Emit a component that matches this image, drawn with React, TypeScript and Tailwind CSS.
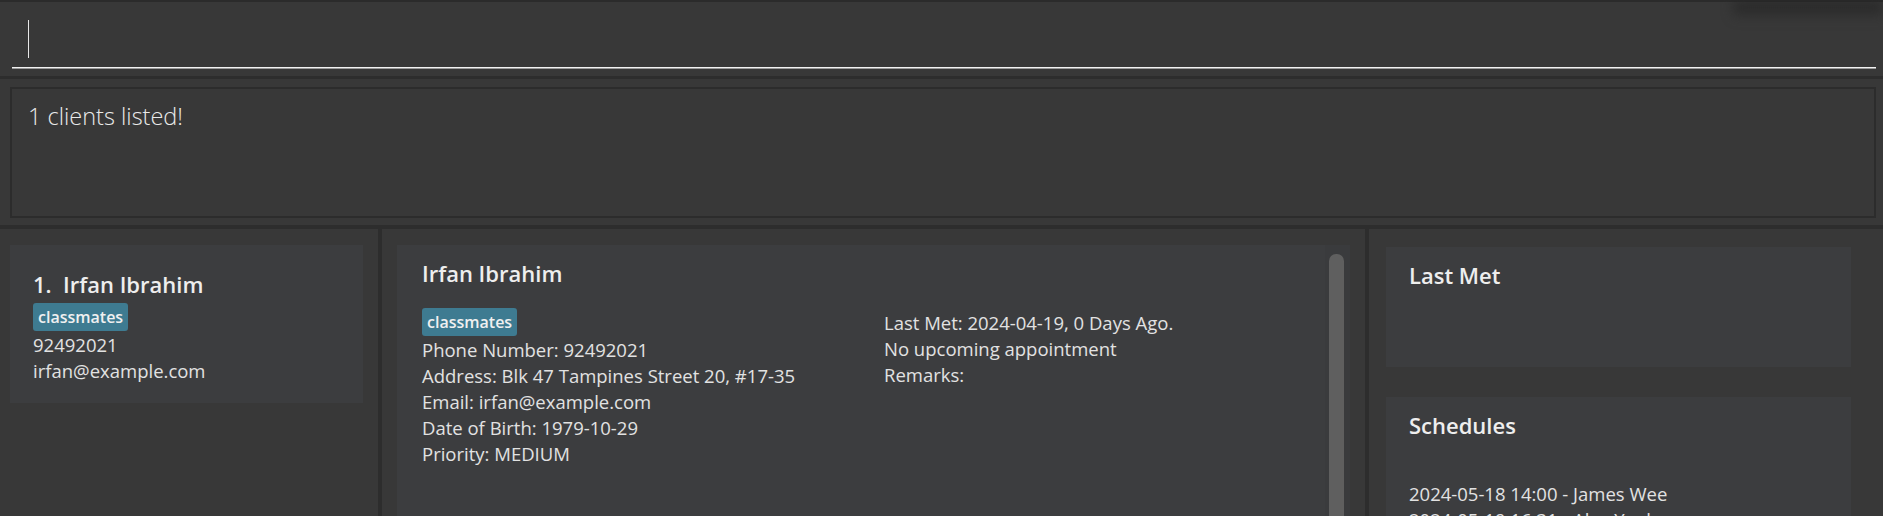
const font = "font-['Open_Sans','Noto_Sans',sans-serif]";

const Tag = ({ label }: { label: string }) => (
  <span className="inline-block bg-[#3e7b91] text-[#f0f0f0] font-semibold text-[16px] leading-[28px] px-[5px] rounded-[3px]">
    {label}
  </span>
);

const App = () => {
  return (
    <div className={`w-full h-[516px] bg-[#383838] overflow-hidden flex flex-col text-[#e6e6e6] ${font}`}>
      {/* command box */}
      <div className="relative h-[76px] border-t-2 border-[#2b2b2b] shrink-0">
        <div className="absolute right-0 top-0 w-[150px] h-[18px] bg-gradient-to-b from-[#232323] to-transparent blur-[6px]" />
        <div className="pt-[18px] pl-[28px]">
          <div className="w-[1px] h-[38px] bg-[#e8e8e8]" />
        </div>
        <div className="mt-[9px] ml-[12px] mr-[7px] h-[2px] bg-[#f2f2f2] border-b border-[#9a9a9a]" />
      </div>
      <div className="h-[3px] bg-[#2d2d2d] shrink-0" />

      {/* result display */}
      <div className="h-[146px] shrink-0 pt-[8px] pl-[10px] pr-[7px]">
        <div className="h-[131px] border-2 border-[#2c2c2c] pl-[16px] pt-[12px]">
          <p className="text-[23.5px] font-light text-[#eaeaea] leading-[30px]">1 clients listed!</p>
        </div>
      </div>
      <div className="h-[4px] bg-[#2d2d2d] shrink-0" />

      {/* main panels */}
      <div className="flex flex-1 min-h-0">
        {/* client list */}
        <div className="w-[378px] shrink-0 pl-[10px] pr-[15px] pt-[16px]">
          <div className="bg-[#3c3d3f] h-[158px] pl-[23px] pt-[24px]">
            <div className="text-[22px] font-semibold text-[#eeeeee] leading-[30px]">
              1.&nbsp;&nbsp;Irfan Ibrahim
            </div>
            <div className="mt-[4px]">
              <Tag label="classmates" />
            </div>
            <div className="text-[18.5px] leading-[26px] text-[#e2e2e2] mt-[1px]">92492021</div>
            <div className="text-[18.5px] leading-[26px] text-[#e2e2e2]">irfan@example.com</div>
          </div>
        </div>
        <div className="w-[4px] shrink-0 bg-[#2d2d2d]" />

        {/* client detail */}
        <div className="w-[983px] shrink-0 pl-[15px] pr-[15px] pt-[16px]">
          <div className="h-full flex bg-[#3c3d3f]">
            <div className="flex-1 pl-[25px] pt-[13px]">
              <h2 className="text-[22px] font-semibold text-[#eeeeee] leading-[30px]">Irfan Ibrahim</h2>
              <div className="flex mt-[20px] text-[18.5px] leading-[26px] text-[#e2e2e2]">
                <div className="w-[462px]">
                  <div className="mb-[1px]">
                    <Tag label="classmates" />
                  </div>
                  <div>Phone Number: 92492021</div>
                  <div>Address: Blk 47 Tampines Street 20, #17-35</div>
                  <div>Email: irfan@example.com</div>
                  <div>Date of Birth: 1979-10-29</div>
                  <div>Priority: MEDIUM</div>
                </div>
                <div className="pt-[2px]">
                  <div>Last Met: 2024-04-19, 0 Days Ago.</div>
                  <div>No upcoming appointment</div>
                  <div>Remarks:</div>
                </div>
              </div>
            </div>
            <div className="w-[25px] bg-[#3a3b3d] pt-[9px] pl-[4px]">
              <div className="w-[15px] h-[400px] rounded-[7px] bg-[#5f5f5f]" />
            </div>
          </div>
        </div>
        <div className="w-[4px] shrink-0 bg-[#2d2d2d]" />

        {/* right side */}
        <div className="flex-1 pl-[17px] pr-[32px] pt-[18px] flex flex-col gap-[30px] min-h-0">
          <div className="bg-[#3c3d3f] h-[120px] shrink-0 pl-[23px] pt-[13px]">
            <h3 className="text-[22px] font-semibold text-[#eeeeee] leading-[30px]">Last Met</h3>
          </div>
          <div className="bg-[#3c3d3f] h-[200px] shrink-0 pl-[23px] pt-[13px]">
            <h3 className="text-[22px] font-semibold text-[#eeeeee] leading-[30px]">Schedules</h3>
            <div className="mt-[41px] text-[18.5px] leading-[26px] text-[#e2e2e2]">
              <div>2024-05-18 14:00 - James Wee</div>
              <div>2024-05-19 16:31 - Alex Yeoh</div>
            </div>
          </div>
        </div>
      </div>
    </div>
  );
};

export default App;
